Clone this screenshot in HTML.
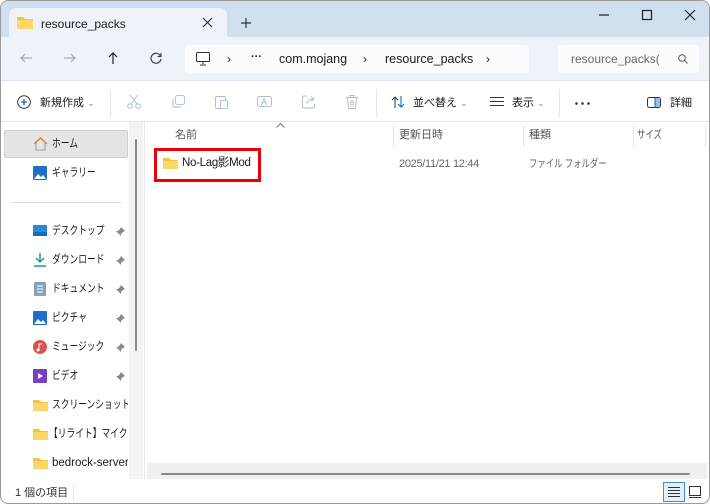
<!DOCTYPE html>
<html><head><meta charset="utf-8"><style>
*{margin:0;padding:0;box-sizing:border-box}
body{width:710px;height:504px;overflow:hidden;background:#fff;font-family:"Liberation Sans","Noto Sans CJK JP",sans-serif;font-size:11px;color:#1a1a1a;position:relative}
.a{position:absolute}
.t{position:absolute;white-space:nowrap;line-height:14px}
.k{position:absolute;white-space:nowrap;line-height:14px;font-size:11.5px;overflow:hidden}
.k span{display:inline-block;transform:scaleX(.76);transform-origin:0 0}
svg{position:absolute;overflow:visible}
</style></head><body>
<div class="a" style="left:0;top:0;width:710px;height:504px;border:1px solid #9a9a9a;border-radius:8px;overflow:hidden;background:#fff">
<!-- title bar -->
<div class="a" style="left:0;top:0;width:710px;height:36px;background:#d0e0ee"></div>
<div class="a" style="left:8px;top:7px;width:218px;height:30px;background:#eef3f9;border-radius:7px 7px 0 0"></div>
<svg style="left:16px;top:15px" width="16" height="13"><path d="M0 1h6l2 2h8v10H0z" fill="#f5c244"/><rect y="4" width="16" height="9" fill="#fbd765"/></svg>
<div class="t" style="left:40px;top:16px;font-size:12px">resource_packs</div>
<svg style="left:202px;top:17px" width="9" height="9"><path d="M0 0L9 9M9 0L0 9" stroke="#333" stroke-width="1.2"/></svg>
<svg style="left:240px;top:17px" width="10" height="10"><path d="M5 0v10M0 5h10" stroke="#333" stroke-width="1.2"/></svg>
<svg style="left:598px;top:13px" width="10" height="2"><path d="M0 1h10" stroke="#222" stroke-width="1.2"/></svg>
<svg style="left:641px;top:9px" width="10" height="10"><rect x=".5" y=".5" width="9" height="9" fill="none" stroke="#222" stroke-width="1.2"/></svg>
<svg style="left:684px;top:9px" width="10" height="10"><path d="M0 0L10 10M10 0L0 10" stroke="#222" stroke-width="1.2"/></svg>
<!-- address row -->
<div class="a" style="left:0;top:36px;width:710px;height:44px;background:#eef3f9;border-bottom:1px solid #dde3ea"></div>
<svg style="left:19px;top:52px" width="12" height="10"><path d="M12 5H1M5 1L1 5l4 4" fill="none" stroke="#aaa" stroke-width="1.2"/></svg>
<svg style="left:63px;top:52px" width="12" height="10"><path d="M0 5h11M7 1l4 4-4 4" fill="none" stroke="#aaa" stroke-width="1.2"/></svg>
<svg style="left:107px;top:51px" width="10" height="12"><path d="M5 12V1M1 5l4-4 4 4" fill="none" stroke="#222" stroke-width="1.2"/></svg>
<svg style="left:149px;top:51px" width="12" height="12"><path d="M10.5 4A5 5 0 1 0 11 7M11 1v3.5H7.5" fill="none" stroke="#444" stroke-width="1.2"/></svg>
<div class="a" style="left:184px;top:44px;width:344px;height:28px;background:#fbfcfe;border-radius:4px"></div>
<svg style="left:195px;top:51px" width="14" height="14"><rect x=".5" y=".5" width="13" height="9" rx="1" fill="none" stroke="#333"/><path d="M7 10v2M4 13h6" stroke="#333"/></svg>
<div class="t" style="left:226px;top:51px;font-size:12px">›</div>
<div class="t" style="left:250px;top:49px;font-weight:bold">···</div>
<div class="t" style="left:278px;top:51px;font-size:12.5px">com.mojang</div>
<div class="t" style="left:362px;top:51px;font-size:12px">›</div>
<div class="t" style="left:384px;top:51px;font-size:12.5px">resource_packs</div>
<div class="t" style="left:485px;top:51px;font-size:12px">›</div>
<div class="a" style="left:557px;top:44px;width:141px;height:28px;background:#fbfcfe;border-radius:4px"></div>
<div class="t" style="left:570px;top:51px;color:#666;font-size:12px">resource_packs(</div>
<svg style="left:677px;top:53px" width="10" height="10"><circle cx="4" cy="4" r="3.3" fill="none" stroke="#555"/><path d="M6.5 6.5L9.5 9.5" stroke="#555"/></svg>
<!-- toolbar -->
<div class="a" style="left:0;top:120px;width:710px;height:1px;background:#e5e5e5"></div>
<svg style="left:16px;top:94px" width="14" height="14"><circle cx="7" cy="7" r="6.3" fill="none" stroke="#333"/><path d="M7 4v6M4 7h6" stroke="#0067c0" stroke-width="1.3"/></svg>
<div class="t" style="left:39px;top:95px">新規作成 <span style="color:#888;font-size:9px">⌄</span></div>
<div class="a" style="left:109px;top:88px;width:1px;height:28px;background:#e5e5e5"></div>
<svg style="left:126px;top:94px" width="14" height="14"><circle cx="3" cy="11" r="2.3" fill="none" stroke="#9cc0e4"/><circle cx="11" cy="11" r="2.3" fill="none" stroke="#9cc0e4"/><path d="M4 9L11 0M10 9L3 0" stroke="#bbb"/></svg>
<svg style="left:171px;top:94px" width="13" height="13"><rect x="3.5" y=".5" width="9" height="9" rx="2" fill="none" stroke="#aac6e6"/><path d="M1 4v7a1 1 0 0 0 1 1h7" fill="none" stroke="#bbb"/></svg>
<svg style="left:214px;top:93px" width="13" height="15"><rect x=".5" y="2.5" width="10" height="12" rx="1.5" fill="none" stroke="#bbb"/><rect x="5.5" y="6.5" width="7" height="8" rx="1" fill="#fff" stroke="#aac6e6"/></svg>
<svg style="left:256px;top:93px" width="15" height="15"><rect x=".5" y="2.5" width="14" height="10" rx="2" fill="none" stroke="#bbb"/><text x="4" y="11" font-size="9" fill="#8fb4dc" font-family="Liberation Sans">A</text></svg>
<svg style="left:301px;top:94px" width="14" height="13"><path d="M5 1H2a1.5 1.5 0 0 0-1.5 1.5v9A1.5 1.5 0 0 0 2 13h9a1.5 1.5 0 0 0 1.5-1.5V9" fill="none" stroke="#bbb"/><path d="M5 9c0-3 3-5 6-5M9 1.5l3 2.5-3 2.5" fill="none" stroke="#aac6e6"/></svg>
<svg style="left:345px;top:94px" width="12" height="14"><path d="M0 2.5h12M4 2.5V.5h4v2M1.5 2.5l1 11h7l1-11M5 5v6M7 5v6" fill="none" stroke="#bbb"/></svg>
<div class="a" style="left:375px;top:88px;width:1px;height:28px;background:#e5e5e5"></div>
<svg style="left:390px;top:95px" width="14" height="12"><path d="M4 12V1M1 4l3-3 3 3" fill="none" stroke="#333"/><path d="M10 0v11M7 8l3 3 3-3" fill="none" stroke="#0067c0"/></svg>
<div class="t" style="left:412px;top:95px">並べ替え <span style="color:#888;font-size:9px">⌄</span></div>
<svg style="left:489px;top:96px" width="14" height="10"><path d="M0 .5h14M0 4.5h14M0 8.5h14" stroke="#333"/></svg>
<div class="t" style="left:511px;top:95px">表示 <span style="color:#888;font-size:9px">⌄</span></div>
<div class="a" style="left:558px;top:88px;width:1px;height:28px;background:#e5e5e5"></div>
<svg style="left:574px;top:101px" width="16" height="3"><circle cx="1.5" cy="1.5" r="1.3" fill="#333"/><circle cx="7.5" cy="1.5" r="1.3" fill="#333"/><circle cx="13.5" cy="1.5" r="1.3" fill="#333"/></svg>
<svg style="left:646px;top:96px" width="14" height="11"><rect x=".5" y=".5" width="13" height="10" rx="2" fill="none" stroke="#333"/><rect x="8" y="1" width="5" height="9" fill="#9cc0e4"/><path d="M8 1v9" stroke="#0067c0"/></svg>
<div class="t" style="left:669px;top:95px">詳細</div>
<!-- sidebar -->
<div class="a" style="left:128px;top:121px;width:14px;height:357px;background:#f3f3f3"></div>
<div class="a" style="left:134px;top:138px;width:2px;height:212px;background:#8a8a8a;border-radius:1px"></div>
<div class="a" style="left:143px;top:121px;width:1px;height:357px;background:#e8e8e8"></div>
<div class="a" style="left:3px;top:129px;width:124px;height:28px;background:#e5e5e5;border:1px solid #cfcfcf;border-radius:2px"></div>
<svg style="left:32px;top:136px" width="15" height="14"><path d="M1 7L7.5 1 14 7" fill="none" stroke="#e07b39" stroke-width="1.5"/><path d="M3 6v7h9V6" fill="none" stroke="#aaa" stroke-width="1.3"/></svg>
<div class="k" style="left:51px;top:136px"><span>ホーム</span></div>
<svg style="left:32px;top:165px" width="14" height="14"><rect width="14" height="14" rx="1" fill="#1e6fc9"/><path d="M1 13l4-5 3 3 2-2 3 4z" fill="#fff"/></svg>
<div class="k" style="left:51px;top:165px"><span>ギャラリー</span></div>
<div class="a" style="left:10px;top:201px;width:110px;height:1px;background:#ddd"></div>
<svg style="left:32px;top:224px" width="14" height="12"><rect width="14" height="11" rx="1" fill="#2b8ad6"/><rect y="7" width="14" height="4" fill="#1a6bb5"/></svg>
<div class="k" style="left:51px;top:223px"><span>デスクトップ</span></div>
<svg style="left:32px;top:252px" width="14" height="14"><path d="M7 0v9M3 5l4 4 4-4" fill="none" stroke="#1d9d8a" stroke-width="1.5"/><path d="M1 13h12" stroke="#1d9d8a" stroke-width="1.5"/></svg>
<div class="k" style="left:51px;top:252px"><span>ダウンロード</span></div>
<svg style="left:33px;top:281px" width="12" height="14"><rect width="12" height="14" rx="1" fill="#8aa2bb"/><path d="M3 4h6M3 7h6M3 10h6" stroke="#fff"/></svg>
<div class="k" style="left:51px;top:281px"><span>ドキュメント</span></div>
<svg style="left:32px;top:310px" width="14" height="14"><rect width="14" height="14" rx="1" fill="#1e6fc9"/><path d="M1 13l4-5 3 3 2-2 3 4z" fill="#fff"/></svg>
<div class="k" style="left:51px;top:310px"><span>ピクチャ</span></div>
<svg style="left:32px;top:339px" width="14" height="14"><circle cx="7" cy="7" r="7" fill="#d9534f"/><path d="M6 10V4h3" stroke="#fff" fill="none"/><circle cx="5" cy="10" r="1.5" fill="#fff"/></svg>
<div class="k" style="left:51px;top:339px"><span>ミュージック</span></div>
<svg style="left:32px;top:368px" width="14" height="14"><rect width="14" height="14" rx="1" fill="#7b3fc4"/><path d="M5 4l5 3-5 3z" fill="#fff"/></svg>
<div class="k" style="left:51px;top:368px"><span>ビデオ</span></div>
<svg style="left:115px;top:226px" width="9" height="9"><path d="M5 0l4 4-2 1-2 2v2L0 4h2l2-2z" fill="#888"/></svg>
<svg style="left:115px;top:255px" width="9" height="9"><path d="M5 0l4 4-2 1-2 2v2L0 4h2l2-2z" fill="#888"/></svg>
<svg style="left:115px;top:284px" width="9" height="9"><path d="M5 0l4 4-2 1-2 2v2L0 4h2l2-2z" fill="#888"/></svg>
<svg style="left:115px;top:313px" width="9" height="9"><path d="M5 0l4 4-2 1-2 2v2L0 4h2l2-2z" fill="#888"/></svg>
<svg style="left:115px;top:342px" width="9" height="9"><path d="M5 0l4 4-2 1-2 2v2L0 4h2l2-2z" fill="#888"/></svg>
<svg style="left:115px;top:371px" width="9" height="9"><path d="M5 0l4 4-2 1-2 2v2L0 4h2l2-2z" fill="#888"/></svg>
<svg style="left:32px;top:398px" width="15" height="12"><path d="M0 1h6l2 2h7v9H0z" fill="#f5c244"/><rect y="4" width="15" height="8" fill="#fbd765"/></svg>
<div class="k" style="left:51px;top:397px;width:76px"><span>スクリーンショット</span></div>
<svg style="left:32px;top:427px" width="15" height="12"><path d="M0 1h6l2 2h7v9H0z" fill="#f5c244"/><rect y="4" width="15" height="8" fill="#fbd765"/></svg>
<div class="k" style="left:48px;top:426px;width:79px"><span>【リライト】マイクラ</span></div>
<svg style="left:32px;top:456px" width="15" height="12"><path d="M0 1h6l2 2h7v9H0z" fill="#f5c244"/><rect y="4" width="15" height="8" fill="#fbd765"/></svg>
<div class="t" style="left:51px;top:455px;width:76px;overflow:hidden;font-size:11.5px">bedrock-server-</div>
<!-- content -->
<svg style="left:275px;top:122px" width="9" height="5"><path d="M.5 4.5l4-4 4 4" fill="none" stroke="#777"/></svg>
<div class="t" style="left:174px;top:127px;color:#555">名前</div>
<div class="a" style="left:392px;top:124px;width:1px;height:22px;background:#e5e5e5"></div>
<div class="t" style="left:398px;top:127px;color:#555">更新日時</div>
<div class="a" style="left:522px;top:124px;width:1px;height:22px;background:#e5e5e5"></div>
<div class="t" style="left:528px;top:127px;color:#555">種類</div>
<div class="a" style="left:632px;top:124px;width:1px;height:22px;background:#e5e5e5"></div>
<div class="k" style="left:636px;top:127px;color:#555;font-size:11px"><span>サイズ</span></div>
<div class="a" style="left:704px;top:124px;width:1px;height:22px;background:#e5e5e5"></div>
<div class="a" style="left:153px;top:147px;width:107px;height:34px;border:3px solid #e8000b"></div>
<svg style="left:162px;top:156px" width="15" height="12"><path d="M0 1h6l2 2h7v9H0z" fill="#f5c244"/><rect y="4" width="15" height="8" fill="#fbd765"/></svg>
<div class="t" style="left:181px;top:155px;font-size:11.5px;letter-spacing:-0.3px">No-Lag影Mod</div>
<div class="t" style="left:398px;top:156px;color:#666;font-size:11px;letter-spacing:-0.3px">2025/11/21 12:44</div>
<div class="k" style="left:528px;top:156px;color:#666;font-size:11px"><span>ファイル フォルダー</span></div>
<div class="a" style="left:146px;top:462px;width:560px;height:16px;background:#f0f0f0"></div>
<div class="a" style="left:160px;top:472px;width:529px;height:2px;background:#8a8a8a;border-radius:1px"></div>
<!-- status -->
<div class="t" style="left:14px;top:485px;color:#333">1 個の項目</div>
<div class="a" style="left:72px;top:484px;width:1px;height:16px;background:#e5e5e5"></div>
<div class="a" style="left:662px;top:481px;width:22px;height:20px;border:1px solid #3c8fd8;background:#e5f0fb"></div>
<svg style="left:667px;top:486px" width="12" height="10"><path d="M0 .5h12M0 3.5h12M0 6.5h12M0 9.5h12" stroke="#333"/></svg>
<svg style="left:688px;top:485px" width="12" height="12"><rect x=".5" y=".5" width="11" height="9" fill="none" stroke="#333"/><path d="M0 11.5h12" stroke="#333"/></svg>
</div>
</body></html>
